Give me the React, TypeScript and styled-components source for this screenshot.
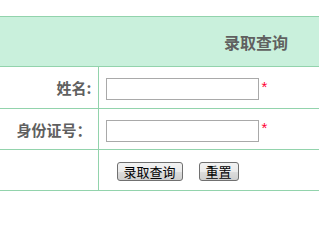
import styled, { createGlobalStyle } from 'styled-components';

const GlobalStyle = createGlobalStyle`
  html, body {
    margin: 0;
    padding: 0;
    background: #fff;
  }
  body {
    font-family: "Noto Sans CJK SC", "Liberation Sans", sans-serif;
    overflow: hidden;
  }
`;

const lineColor = '#92d3ac';

function App() {
  return (
    <Page>
      <GlobalStyle />
      <FormTable>
        <tbody>
          <tr>
            <HeadCell colSpan={2}>录取查询</HeadCell>
          </tr>
          <Row $height={42}>
            <Label>姓名:</Label>
            <Field>
              <TextInput type="text" />
              <Required>*</Required>
            </Field>
          </Row>
          <Row $height={41}>
            <Label>身份证号：</Label>
            <Field>
              <TextInput type="text" />
              <Required>*</Required>
            </Field>
          </Row>
          <Row $height={41}>
            <Label />
            <Field>
              <Actions>
                <Button type="button">录取查询</Button>
                <Button type="button">重置</Button>
              </Actions>
            </Field>
          </Row>
        </tbody>
      </FormTable>
    </Page>
  );
}

const Page = styled.div`
  padding-top: 16px;
  width: 319px;
`;

const FormTable = styled.table`
  width: 100%;
  border-collapse: collapse;
  border-top: 1px solid ${lineColor};

  td {
    padding: 0;
    border-bottom: 1px solid ${lineColor};
  }
`;

const HeadCell = styled.td`
  height: 49px;
  background: #c9f0dc;
  color: #606060;
  font-size: 16px;
  font-weight: bold;
  text-align: right;
  padding-right: 31px !important;
  vertical-align: middle;
`;

const Row = styled.tr<{ $height: number }>`
  height: ${(p) => p.$height}px;
`;

const Label = styled.td`
  width: 98px;
  box-sizing: border-box;
  border-right: 1px solid ${lineColor};
  text-align: right;
  padding-right: 6px !important;
  color: #606060;
  font-size: 15px;
  font-weight: bold;
  vertical-align: middle;
  white-space: nowrap;
`;

const Field = styled.td`
  padding-left: 7px !important;
  vertical-align: middle;
  white-space: nowrap;
`;

const TextInput = styled.input`
  box-sizing: border-box;
  width: 153px;
  height: 22px;
  margin: 0;
  padding: 1px 3px;
  border: 1px solid #a9a9a9;
  background: #fff;
  vertical-align: middle;
  outline: none;
`;

const Required = styled.span`
  display: inline-block;
  margin-left: 3px;
  color: #ff0033;
  font-family: "Liberation Sans", sans-serif;
  font-size: 15px;
  vertical-align: middle;
  position: relative;
  top: -3px;
`;

const Actions = styled.div`
  display: flex;
  align-items: center;
  gap: 16px;
  padding-left: 11px;
  padding-top: 2px;
`;

const Button = styled.button`
  box-sizing: border-box;
  height: 19px;
  padding: 0 6px;
  border: 1px solid #707070;
  border-radius: 3px;
  background: linear-gradient(#f2f2f2, #ebebeb 50%, #dddddd 51%, #cfcfcf);
  color: #000;
  font-family: "Noto Sans CJK SC", sans-serif;
  font-size: 13px;
  line-height: 17px;
  cursor: pointer;
`;

export default App;
